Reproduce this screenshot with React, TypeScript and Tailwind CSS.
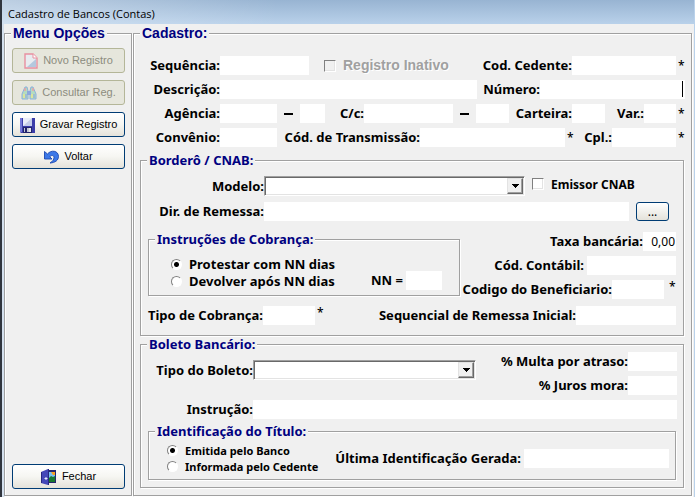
import type { ReactNode } from "react"
import clsx from "clsx"

interface GroupProps {
  title: string
  large?: boolean
  className?: string
  children: ReactNode
}

// Etched group box with its caption sitting on the top border
function Group({ title, large, className, children }: GroupProps) {
  return (
    <fieldset
      className={clsx(
        "flex min-w-0 flex-col border border-[#a0a0a0] shadow-[1px_1px_0_#fff,inset_1px_1px_0_#fff]",
        className
      )}
    >
      <legend
        className={clsx(
          "bg-[#f0f0f0] px-[2px] font-bold whitespace-nowrap text-[#000080]",
          large
            ? "ml-[6px] font-['Liberation_Sans',sans-serif] text-[14px] leading-[19px]"
            : "ml-[6px] leading-[15px]"
        )}
      >
        {title}
      </legend>
      {children}
    </fieldset>
  )
}

interface FieldProps {
  id: string
  label: string
  labelClass?: string
  inputClass?: string
  className?: string
  value?: string
}

function Field({ id, label, labelClass, inputClass, className, value }: FieldProps) {
  return (
    <div className={clsx("flex h-[19px] min-w-0 items-center", className)}>
      <label htmlFor={id} className={clsx("flex shrink-0 justify-end whitespace-nowrap", labelClass)}>
        {label}
      </label>
      <input
        id={id}
        defaultValue={value}
        className={clsx(
          "h-[19px] min-w-0 bg-white px-[1px] text-right text-[12px] font-normal outline-none",
          inputClass
        )}
      />
    </div>
  )
}

function Star({ className }: { className?: string }) {
  return (
    <span className={clsx("w-[9px] shrink-0 pl-[2px] text-[12px] leading-[13px] font-medium", className)}>
      *
    </span>
  )
}

function Dash() {
  return <span className="mx-[7px] h-[2px] w-[9px] shrink-0 bg-black" />
}

function Combo({ id, className }: { id: string; className?: string }) {
  return (
    <div className={clsx("relative h-[20px]", className)}>
      <select
        id={id}
        className="h-full w-full appearance-none border border-t-[#a0a0a0] border-r-white border-b-white border-l-[#a0a0a0] bg-white shadow-[inset_1px_1px_0_#696969,inset_-1px_-1px_0_#e3e3e3] outline-none"
      />
      <span className="pointer-events-none absolute top-[2px] right-[2px] flex h-[16px] w-[16px] items-center justify-center border border-t-[#e3e3e3] border-r-[#696969] border-b-[#696969] border-l-[#e3e3e3] bg-[#f0f0f0] shadow-[inset_-1px_-1px_0_#a0a0a0]">
        <svg width="7" height="4" viewBox="0 0 7 4" shapeRendering="crispEdges">
          <path d="M0 0h7v1H0zM1 1h5v1H1zM2 2h3v1H2zM3 3h1v1H3z" />
        </svg>
      </span>
    </div>
  )
}

const sunken = "border border-t-[#808080] border-l-[#808080] border-r-white border-b-white"

function Check({ id, disabled }: { id: string; disabled?: boolean }) {
  return (
    <input
      id={id}
      type="checkbox"
      disabled={disabled}
      className={clsx(
        "h-[12px] w-[12px] shrink-0 appearance-none shadow-[inset_-1px_-1px_0_#e3e3e3]",
        sunken,
        disabled ? "bg-[#f0f0f0]" : "bg-white"
      )}
    />
  )
}

interface RadioProps {
  name: string
  label: string
  checked?: boolean
  className?: string
}

function Radio({ name, label, checked, className }: RadioProps) {
  return (
    <label className={clsx("flex items-center gap-[7px] whitespace-nowrap", className)}>
      <input
        type="radio"
        name={name}
        defaultChecked={checked}
        className={clsx(
          "h-[11px] w-[11px] shrink-0 appearance-none rounded-full bg-white checked:bg-[radial-gradient(circle,#000_2px,#fff_3px)]",
          sunken
        )}
      />
      {label}
    </label>
  )
}

interface MenuButtonProps {
  icon: ReactNode
  label: string
  disabled?: boolean
  className?: string
}

function MenuButton({ icon, label, disabled, className }: MenuButtonProps) {
  return (
    <button
      disabled={disabled}
      className={clsx(
        "flex h-[25px] w-full shrink-0 items-center justify-center gap-[5px] rounded-[3px] border font-['Liberation_Sans',sans-serif] text-[11px] font-normal whitespace-nowrap",
        disabled
          ? "border-[#b4b698] bg-[#e6e6dc] text-[#8c8c7e]"
          : "border-[#003c74] bg-linear-to-b from-white via-[#f6f6f2] to-[#e4e2da] text-black",
        className
      )}
    >
      {icon}
      {label}
    </button>
  )
}

function PageIcon() {
  return (
    <svg width="14" height="16" viewBox="0 0 14 16">
      <path d="M1 1h8l4 4v10H1z" fill="#e8ecf0" stroke="#e890a0" strokeWidth="1.4" />
      <path d="M12 6v8H3z" fill="#b4c8de" />
      <path d="M9 1v4h4" fill="#fff" stroke="#e890a0" />
    </svg>
  )
}

function BinocularsIcon() {
  return (
    <svg width="16" height="14" viewBox="0 0 16 14">
      <path d="M4 1h2l1 4v8H1V8z" fill="#b4dcc0" stroke="#8cb0dc" />
      <path d="M10 1h2l3 7v5H9V5z" fill="#b4dcc0" stroke="#8cb0dc" />
      <path d="M6 5h4v4H6z" fill="#8ca8dc" />
      <path d="M4 2v3M12 2v3" stroke="#e8a0a8" strokeWidth="1.5" />
      <path d="M3 8v4M11 8v4" stroke="#e8e890" strokeWidth="1.5" />
      <path d="M5 8v4M13 8v4" stroke="#88a0e0" />
    </svg>
  )
}

function DiskIcon() {
  return (
    <svg width="15" height="16" viewBox="0 0 15 16">
      <path d="M0 1h15v15H1l-1-1z" fill="#3b3da8" />
      <path d="M0 1h2v14H0z" fill="#7478d8" />
      <path d="M3 1h9v8H3z" fill="#e8ecf8" />
      <path d="M12 1v8H3z" fill="#c4cce8" />
      <path d="M3 10h9v6H3z" fill="#22246c" />
      <path d="M4 11h7v4H4z" fill="#c4c8d4" />
      <path d="M5 11h2v4H5z" fill="#22246c" />
      <path d="M9 11h2v4H9z" fill="#e8e8ee" />
    </svg>
  )
}

function UndoIcon() {
  return (
    <svg width="15" height="14" viewBox="0 0 15 14">
      <path
        d="M.5 1.500V9H8L5.800 6.800C7 5 10 5 10 7.500c0 2-1.500 4-4 5.500 5.500-.3 8.500-3 8.500-6.500C14.500.5 7-.5 3.500 4z"
        fill="#3c78e8"
        stroke="#1c48b0"
        strokeWidth=".9"
      />
    </svg>
  )
}

function DoorIcon() {
  return (
    <svg width="16" height="16" viewBox="0 0 16 16">
      <path d="M6 1h9v13H6z" fill="#24266c" />
      <path d="M8 3h6v10H8z" fill="#78c0f0" />
      <path d="M10 3h4v3h-2z" fill="#f8a020" />
      <path d="M8 9l2-2 2 1 2-1v6H8z" fill="#187830" />
      <path d="M0 3l7-3h1v16H7l-7-2z" fill="#4448b8" />
      <path d="M0 3h1v11H0zM7 0h1v16H7z" fill="#282a80" />
      <path d="M3.500 9.500h3M5 8v3" stroke="#e8ecff" />
    </svg>
  )
}

export default function App() {
  return (
    <div className="flex min-h-screen flex-col border-r border-l-2 border-r-[#b9d1ea] border-l-[#30353e] bg-[#f0f0f0] font-['Noto_Sans',sans-serif] text-[13px] leading-[15px] font-bold text-black">
      <header className="flex h-[24px] items-center bg-[linear-gradient(to_right,rgba(255,255,255,0.35),transparent_40%),linear-gradient(to_bottom,#98b4d2,#b9d1ea)] pt-[2px] pl-[6px] font-['Open_Sans',sans-serif] text-[11px] font-normal">
        Cadastro de Bancos (Contas)
      </header>

      <main className="flex grow gap-px border-l-2 border-[#d4e0ee] pr-[2px] pb-px">
        <Group title="Menu Opções" large className="w-[128px] shrink-0">
          <div className="flex grow flex-col gap-[7px] pt-[5px] pr-[6px] pb-[6px] pl-[7px]">
            <MenuButton icon={<PageIcon />} label="Novo Registro" disabled />
            <MenuButton icon={<BinocularsIcon />} label="Consultar Reg." disabled />
            <MenuButton icon={<DiskIcon />} label="Gravar Registro" />
            <MenuButton icon={<UndoIcon />} label="Voltar" />
            <MenuButton icon={<DoorIcon />} label="Fechar" className="mt-auto" />
          </div>
        </Group>

        <Group title="Cadastro:" large className="grow">
          <div className="flex flex-col px-[6px] pt-[13px] pb-[7px]">
            <div className="flex flex-col gap-[5px]">
              <div className="flex items-center">
                <Field id="sequencia" label="Sequência:" labelClass="w-[80px]" inputClass="w-[89px]" />
                <div className="ml-[15px] flex items-center gap-[7px]">
                  <Check id="inativo" disabled />
                  <label
                    htmlFor="inativo"
                    className="font-['Liberation_Sans',sans-serif] text-[14px] whitespace-nowrap text-[#a0a0a0] [text-shadow:1px_1px_0_#fff]"
                  >
                    Registro Inativo
                  </label>
                </div>
                <Field id="cedente" label="Cod. Cedente:" className="ml-auto" inputClass="w-[104px]" />
                <Star />
              </div>
              <div className="flex items-center">
                <Field
                  id="descricao"
                  label="Descrição:"
                  className="flex-1"
                  labelClass="w-[80px]"
                  inputClass="flex-1"
                />
                <div className="relative">
                  <Field id="numero" label="Número:" labelClass="w-[63px]" inputClass="w-[145px]" />
                  <span className="absolute top-[1px] right-[2px] h-[16px] w-px bg-black" />
                </div>
              </div>
              <div className="flex items-center">
                <Field id="agencia" label="Agência:" labelClass="w-[80px]" inputClass="w-[57px]" />
                <Dash />
                <input aria-label="Dígito da agência" className="h-[19px] w-[25px] bg-white" />
                <Field
                  id="conta"
                  label="C/c:"
                  className="flex-1"
                  labelClass="w-[39px]"
                  inputClass="flex-1"
                />
                <Dash />
                <input aria-label="Dígito da conta" className="h-[19px] w-[33px] bg-white" />
                <Field id="carteira" label="Carteira:" labelClass="w-[63px]" inputClass="w-[33px]" />
                <Field id="variacao" label="Var.:" labelClass="w-[39px]" inputClass="w-[32px]" />
                <Star />
              </div>
              <div className="flex items-center">
                <Field id="convenio" label="Convênio:" labelClass="w-[80px]" inputClass="w-[57px]" />
                <Field
                  id="transmissao"
                  label="Cód. de Transmissão:"
                  className="flex-1"
                  labelClass="w-[143px]"
                  inputClass="flex-1"
                />
                <Star />
                <Field id="cpl" label="Cpl.:" labelClass="w-[38px]" inputClass="w-[64px]" />
                <Star />
              </div>
            </div>

            <Group title="Borderô / CNAB:" className="mt-[6px] mr-[1px]">
              <div className="flex flex-col pt-[8px] pr-[7px] pb-[10px] pl-[7px]">
                <div className="flex items-center">
                  <label htmlFor="modelo" className="w-[116px] shrink-0 text-right">
                    Modelo:
                  </label>
                  <Combo id="modelo" className="flex-1" />
                  <div className="flex w-[151px] shrink-0 items-center gap-[7px] pb-[4px] pl-[7px]">
                    <Check id="emissor" />
                    <label htmlFor="emissor" className="text-[12px]">
                      Emissor CNAB
                    </label>
                  </div>
                </div>
                <div className="mt-[6px] flex gap-[7px] pr-[7px]">
                  <Field
                    id="remessa"
                    label="Dir. de Remessa:"
                    className="flex-1"
                    labelClass="w-[116px]"
                    inputClass="flex-1"
                  />
                  <button
                    aria-label="Procurar diretório"
                    className="h-[19px] w-[33px] rounded-[3px] border border-[#003c74] bg-linear-to-b from-white to-[#e4e2da] text-[12px] leading-[12px] font-normal"
                  >
                    ...
                  </button>
                </div>
                <div className="mt-[11px] flex items-start justify-between">
                  <Group title="Instruções de Cobrança:" className="w-[312px] shrink-0">
                    <div className="flex justify-between pt-[9px] pr-[17px] pb-[5px] pl-[22px]">
                      <div>
                        <Radio name="instrucao" label="Protestar com NN dias" checked className="h-[17px]" />
                        <Radio name="instrucao" label="Devolver após NN dias" className="h-[17px]" />
                      </div>
                      <Field
                        id="nn"
                        label="NN ="
                        className="self-end"
                        labelClass="pr-[3px]"
                        inputClass="w-[36px]"
                      />
                    </div>
                  </Group>
                  <div className="flex shrink-0 flex-col items-end gap-[5px]">
                    <Field id="taxa" label="Taxa bancária:" inputClass="w-[33px]" value="0,00" />
                    <Field id="contabil" label="Cód. Contábil:" labelClass="pr-[3px]" inputClass="w-[89px]" />
                    <div className="flex">
                      <Field id="beneficiario" label="Codigo do Beneficiario:" inputClass="w-[52px]" />
                      <Star className="ml-[3px]" />
                    </div>
                  </div>
                </div>
                <div className="mt-[7px] flex">
                  <Field
                    id="tipoCobranca"
                    label="Tipo de Cobrança:"
                    labelClass="w-[115px]"
                    inputClass="w-[52px]"
                  />
                  <Star />
                  <Field
                    id="sequencial"
                    label="Sequencial de Remessa Inicial:"
                    className="ml-auto"
                    inputClass="w-[100px]"
                  />
                </div>
              </div>
            </Group>

            <Group title="Boleto Bancário:" className="mt-px mr-[1px]">
              <div className="flex flex-col pr-[6px] pb-[7px] pl-[7px]">
                <div className="flex items-start">
                  <div className="flex flex-1 items-center pt-[8px]">
                    <label htmlFor="tipoBoleto" className="w-[105px] shrink-0 text-right">
                      Tipo do Boleto:
                    </label>
                    <Combo id="tipoBoleto" className="flex-1" />
                  </div>
                  <div className="flex w-[201px] shrink-0 flex-col items-end gap-[5px]">
                    <Field id="multa" label="% Multa por atraso:" inputClass="w-[49px]" />
                    <Field id="juros" label="% Juros mora:" inputClass="w-[49px]" />
                  </div>
                </div>
                <Field
                  id="instrucaoBoleto"
                  label="Instrução:"
                  className="mt-[5px]"
                  labelClass="w-[105px]"
                  inputClass="flex-1"
                />
                <Group title="Identificação do Título:" className="mt-[5px] mr-[1px]">
                  <div className="flex items-center pt-[3px] pr-[6px] pb-[5px] pl-[18px]">
                    <div className="text-[11px]">
                      <Radio name="titulo" label="Emitida pelo Banco" checked className="h-[16px]" />
                      <Radio name="titulo" label="Informada pelo Cedente" className="h-[16px]" />
                    </div>
                    <Field
                      id="ultima"
                      label="Última Identificação Gerada:"
                      className="ml-auto"
                      labelClass="pr-[3px]"
                      inputClass="w-[145px]"
                    />
                  </div>
                </Group>
              </div>
            </Group>
          </div>
        </Group>
      </main>
    </div>
  )
}
